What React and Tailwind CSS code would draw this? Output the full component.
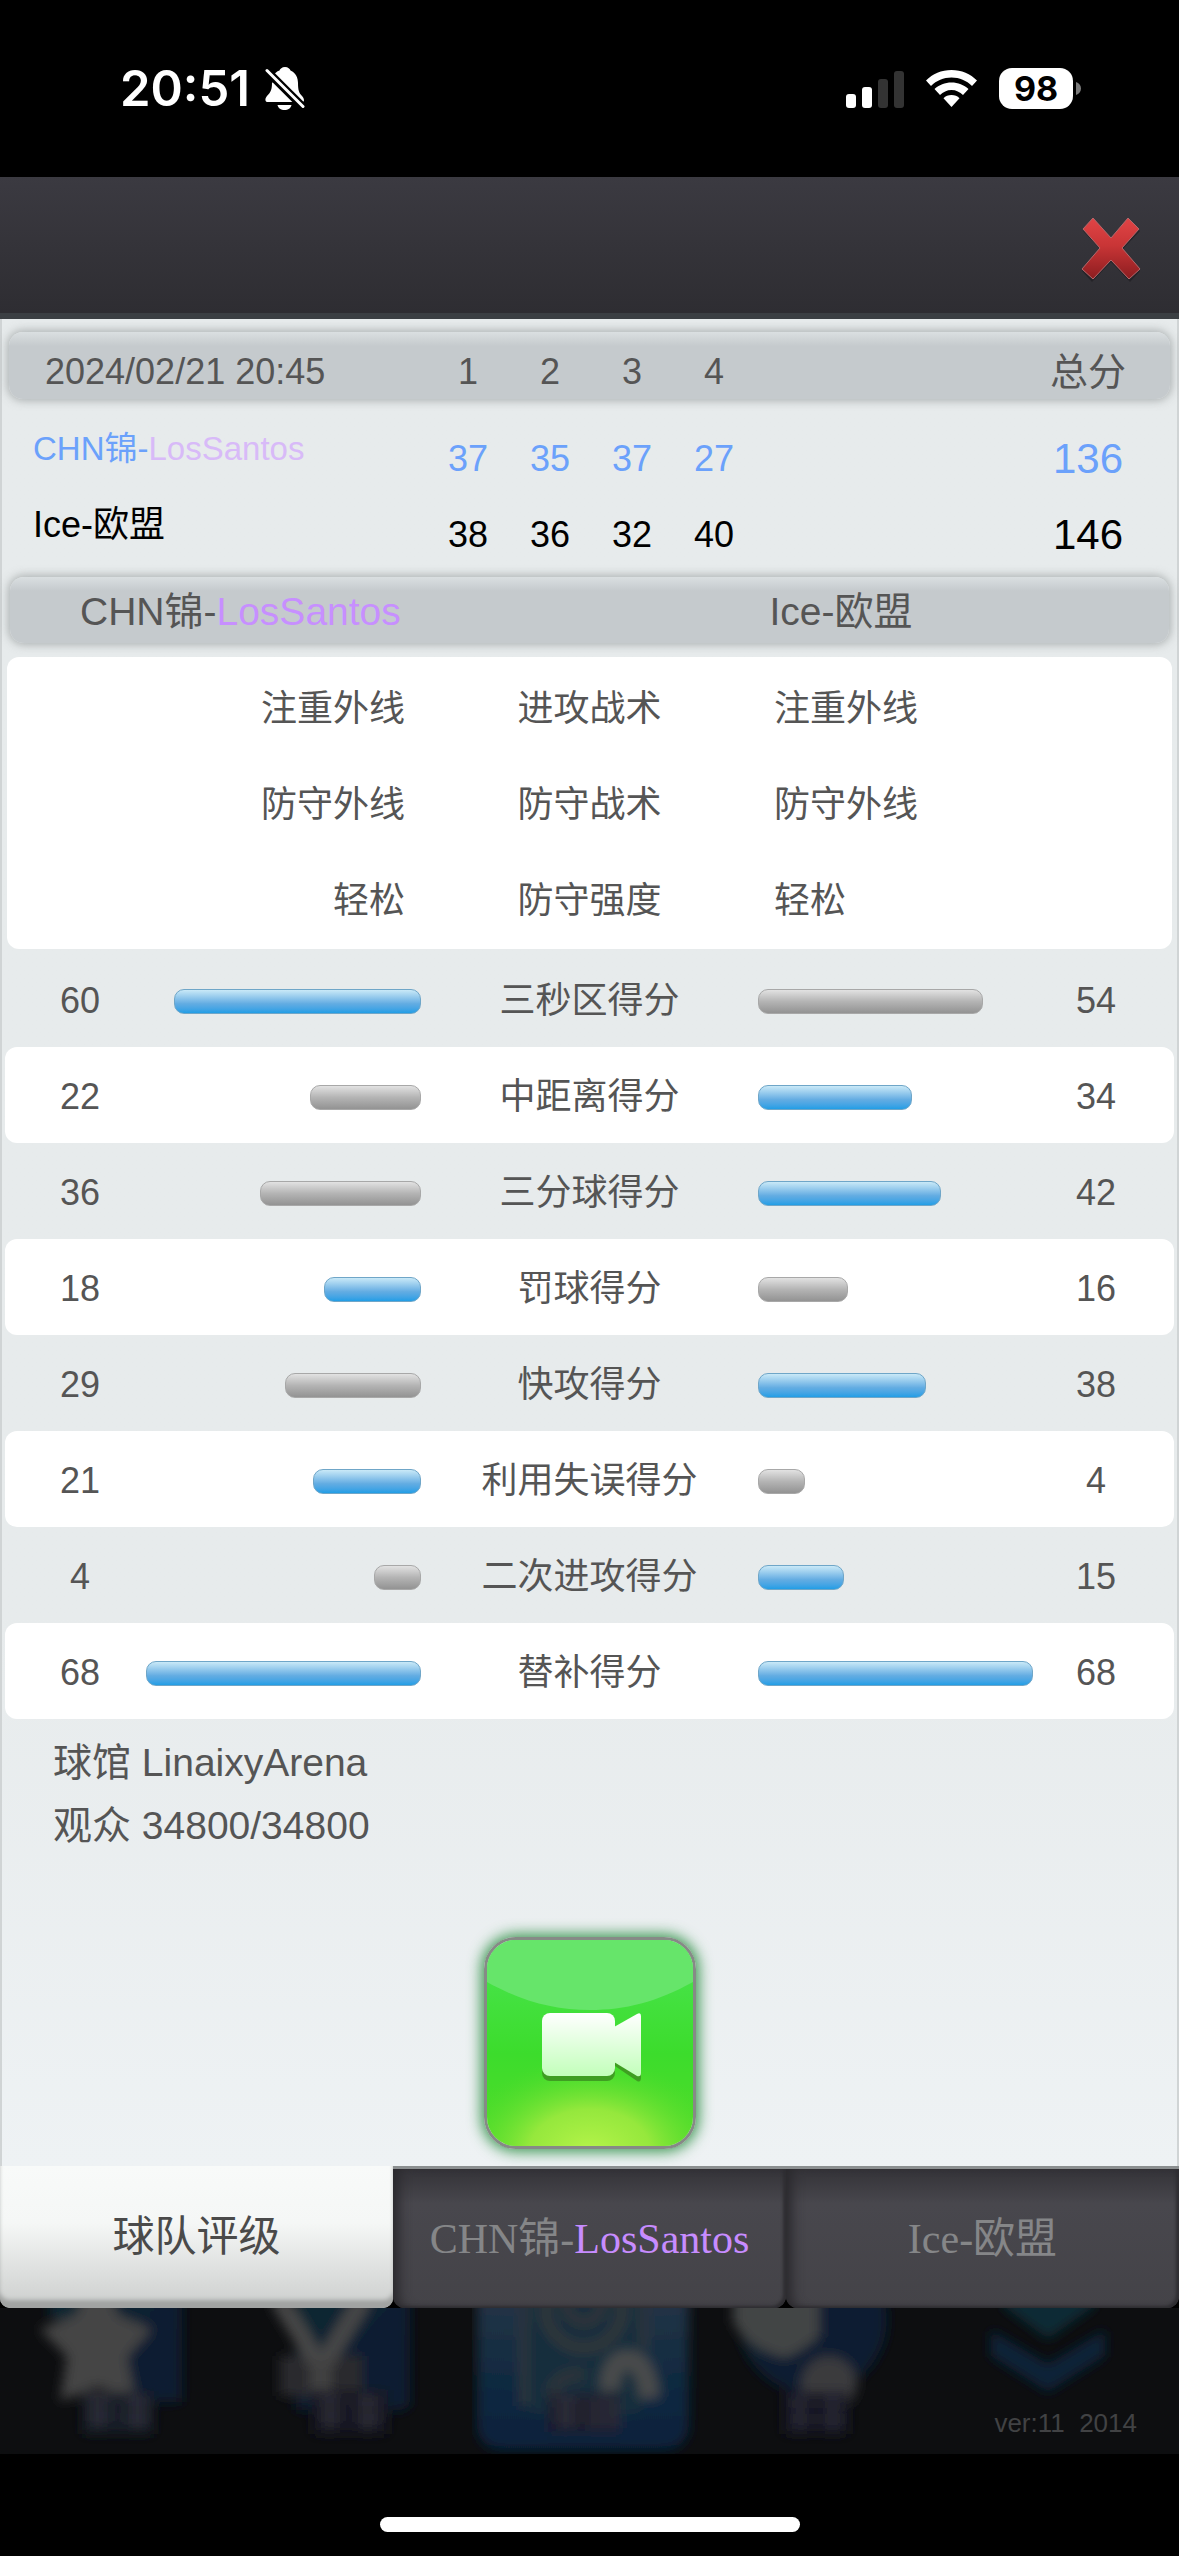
import { useState } from "react";
import clsx from "clsx";

const quarters = [
    { name: <><span className="text-[#6ba1fb]">CHN锦-</span><span className="text-[#d8baf8]">LosSantos</span></>, points: [37, 35, 37, 27], total: 136, color: "text-[#6ba1fb]", size: "text-[33px]" },
    { name: "Ice-欧盟", points: [38, 36, 32, 40], total: 146, color: "text-black", size: "text-[36px]" },
];

const tactics = [
    { home: "注重外线", label: "进攻战术", away: "注重外线" },
    { home: "防守外线", label: "防守战术", away: "防守外线" },
    { home: "轻松", label: "防守强度", away: "轻松" },
];

const stats = [
    { label: "三秒区得分", home: 60, away: 54 },
    { label: "中距离得分", home: 22, away: 34 },
    { label: "三分球得分", home: 36, away: 42 },
    { label: "罚球得分", home: 18, away: 16 },
    { label: "快攻得分", home: 29, away: 38 },
    { label: "利用失误得分", home: 21, away: 4 },
    { label: "二次进攻得分", home: 4, away: 15 },
    { label: "替补得分", home: 68, away: 68 },
];

const barStyle = "rounded-[14px] bg-gradient-to-b from-[#dadfe1] from-0% via-[#c5cacd] via-[14px] to-[#c5cacd] shadow-[0_0_8px_2px_rgba(120,125,125,0.5)]";

function StatusBar() {
    return (
        <div className="flex h-[177px] shrink-0 items-center justify-between bg-black pr-[98px] pl-[120px] font-['Inter',sans-serif] text-white">
            <div className="flex items-center gap-[15px]">
                <span className="text-[49px] leading-[60px] font-semibold">20:51</span>
                <svg className="h-[44px] w-[40px]" viewBox="0 0 40 44" aria-hidden="true">
                    <path d="M20 0c3 0 5 2 5.500 3.500C31 6 33 11 33 16c0 7 1 10 4 13 2 2 3 6 .5 6H3C0 35-.5 32 2 29c4-4 5-7 5-13 0-6 2-10.500 7.500-12.500C15 2 17 0 20 0z" fill="#fff" />
                    <path d="M12.500 38h14c-.5 3-3.500 5-7 5s-6.500-2-7-5z" fill="#fff" />
                    <path d="M0 0L12 0L40 32V44L36 44L0 8z" fill="none" />
                    <path d="M-2 0l42 42" stroke="#000" strokeWidth="8" />
                    <path d="M-2 6L8 16V2z" fill="#000" />
                    <path d="M2 3.500l36 36" stroke="#fff" strokeWidth="3" strokeLinecap="round" />
                </svg>
            </div>
            <div className="flex items-center">
                <svg className="h-[38px] w-[58px]" viewBox="0 0 58 38" aria-hidden="true">
                    <rect x="0" y="24" width="10" height="14" rx="3" fill="#fff" />
                    <rect x="16" y="17" width="10" height="21" rx="3" fill="#fff" />
                    <rect x="32" y="9" width="10" height="29" rx="3" fill="#333" />
                    <rect x="48" y="1" width="10" height="37" rx="3" fill="#333" />
                </svg>
                <svg className="ml-[22px] h-[37px] w-[51px]" viewBox="0 0 51 37" aria-hidden="true">
                    <path d="M25.500 0C35.500 0 44.500 4 51 10.500l-5 5.500C40.500 10.500 33.500 7.500 25.500 7.500S10.500 10.500 5 16L0 10.500C6.500 4 15.500 0 25.500 0z" fill="#fff" />
                    <path d="M25.500 12.500c6.500 0 12.500 2.500 17 6.500l-5.500 6c-3-3-7-5-11.500-5S17 22 14 25l-5.500-6c4.500-4 10.500-6.500 17-6.500z" fill="#fff" />
                    <path d="M25.500 25c3.200 0 6 1.200 8 3.200L25.500 37l-8-8.800c2-2 4.800-3.200 8-3.200z" fill="#fff" />
                </svg>
                <div className="ml-[22px] flex h-[41px] w-[74px] items-center justify-center rounded-[13px] bg-white text-[34px] leading-[40px] font-bold text-black">
                    98
                </div>
                <svg className="ml-[3px] h-[13px] w-[5px]" viewBox="0 0 5 13" aria-hidden="true">
                    <path d="M0 0c3 1 5 3.500 5 6.500S3 12 0 13z" fill="#7a7a7a" />
                </svg>
            </div>
        </div>
    );
}

function Bar({ value, win }) {
    return (
        <div
            className={clsx(
                "h-[25px] rounded-[10px] border",
                win
                    ? "border-[#6fa6c8] bg-gradient-to-b from-[#c9e9f7] via-[#62ace2] via-60% to-[#1f9ee6]"
                    : "border-[#a8a8a8] bg-gradient-to-b from-[#e2e2e2] via-[#b4b4b4] via-50% to-[#939393]"
            )}
            style={{ width: Math.round(33 + value * 3.56) }}
        />
    );
}

function ScoreTable() {
    const cols = "grid grid-cols-[418px_repeat(4,82px)_1fr_164px]";
    return (
        <table className="mx-[7px] block text-[36px] leading-[44px]">
            <thead className="block">
                <tr className={clsx(cols, barStyle, "h-[67px] items-center pt-[12px] text-[#555]")}>
                    <th className="pl-[36px] text-left font-normal">2024/02/21 20:45</th>
                    {[1, 2, 3, 4].map((q) => (
                        <th key={q} className="font-normal">{q}</th>
                    ))}
                    <th className="col-start-7 text-[38px] font-normal">总分</th>
                </tr>
            </thead>
            <tbody className="block pt-[22px] pb-[4px]">
                {quarters.map((team) => (
                    <tr key={team.total} className={clsx(cols, team.color, "h-[76px] items-center")}>
                        <th className={clsx("pb-[20px] pl-[24px] text-left font-normal", team.size)}>{team.name}</th>
                        {team.points.map((p, i) => (
                            <td key={i} className="text-center">{p}</td>
                        ))}
                        <td className="col-start-7 text-center text-[42px]">{team.total}</td>
                    </tr>
                ))}
            </tbody>
        </table>
    );
}

function VideoButton() {
    return (
        <button aria-label="录像" className="h-[212px] w-[212px] overflow-hidden rounded-[32px] border-[3px] border-[#868a86] shadow-[0_0_14px_3px_rgba(20,130,45,0.8)]">
            <svg className="h-full w-full" viewBox="0 0 206 206">
                <defs>
                    <linearGradient id="green" x1="0" y1="0" x2="0" y2="1">
                        <stop offset="0" stopColor="#4be653" />
                        <stop offset="0.55" stopColor="#3cdc2c" />
                        <stop offset="1" stopColor="#52dc28" />
                    </linearGradient>
                    <radialGradient id="glow" gradientUnits="userSpaceOnUse" cx="0" cy="0" r="100" gradientTransform="translate(103 212) scale(1.35 0.95)">
                        <stop offset="0" stopColor="#b6f44a" />
                        <stop offset="0.45" stopColor="#a2ea40" stopOpacity="0.85" />
                        <stop offset="1" stopColor="#4edc2c" stopOpacity="0" />
                    </radialGradient>
                    <linearGradient id="camera" x1="0" y1="0" x2="0" y2="1">
                        <stop offset="0" stopColor="#fff" />
                        <stop offset="1" stopColor="#c2ffba" />
                    </linearGradient>
                </defs>
                <rect width="206" height="206" fill="url(#green)" />
                <rect width="206" height="206" fill="url(#glow)" />
                <path d="M0 0h206v42C170 62 138 70 103 70S36 62 0 42z" fill="#66e56a" />
                <g fill="#3f9e22">
                    <rect x="55" y="79" width="73" height="62" rx="8" />
                    <path d="M128 92l22-13q4-2 4 2v56q0 6-4 4l-22-15z" />
                </g>
                <g fill="url(#camera)">
                    <rect x="55" y="73" width="73" height="63" rx="8" />
                    <path d="M127 87l23-13q4-2 4 2v57q0 4-4 3l-23-14z" />
                </g>
            </svg>
        </button>
    );
}

// Main menu behind the dialog, out of focus
function DimmedMenu() {
    const cell = "h-[146px] w-full overflow-hidden";
    return (
        <div className="relative grid h-[146px] shrink-0 grid-cols-5 overflow-hidden bg-[#0d0e10]">
            <svg className={cell} viewBox="0 0 236 146" preserveAspectRatio="none" aria-hidden="true">
                <defs>
                    <filter id="soft" x="-20%" y="-20%" width="140%" height="140%">
                        <feGaussianBlur stdDeviation="6" />
                    </filter>
                    <linearGradient id="navy" x1="0" y1="0" x2="1" y2="1">
                        <stop offset="0" stopColor="#0a2a33" />
                        <stop offset="0.6" stopColor="#091c30" />
                        <stop offset="1" stopColor="#081a30" />
                    </linearGradient>
                    <linearGradient id="tile" x1="0" y1="0" x2="0" y2="1">
                        <stop offset="0" stopColor="#293646" />
                        <stop offset="0.5" stopColor="#132c42" />
                        <stop offset="1" stopColor="#06203c" />
                    </linearGradient>
                </defs>
                <g filter="url(#soft)" colorInterpolationFilters="sRGB">
                    <path d="M50-10H182V94H125L110 20L50 10z" fill="url(#navy)" />
                    <path d="M98-45l20 52 34 14-25 28 9 44-38-14-38 14 7-44-27-28 36-14z" fill="#454545" />
                    <path d="M82 84h72v42H82z" fill="#191a25" />
                    <path d="M86 92h26M98 84v36M88 108h24M124 94h26M138 86v34M124 110h26" stroke="#32323d" strokeWidth="5" />
                </g>
            </svg>
            <svg className={cell} viewBox="0 0 236 146" preserveAspectRatio="none" aria-hidden="true">
                <g filter="url(#soft)">
                    <path d="M60-10h114V94q0 8-12 8H60z" fill="url(#navy)" />
                    <path d="M44 48h82v40H44z" fill="#2b2c2e" />
                    <path d="M42-10L85 60L128-10" fill="none" stroke="#464646" strokeWidth="18" />
                    <path d="M85 50v38" stroke="#434343" strokeWidth="20" />
                    <path d="M76 82h76v44H76z" fill="#181924" />
                    <path d="M82 92h24M94 86v36M84 108h22M118 94h28M132 86v36M120 110h26" stroke="#30303b" strokeWidth="5" />
                </g>
            </svg>
            <svg className={cell} viewBox="0 0 236 146" preserveAspectRatio="none" aria-hidden="true">
                <g filter="url(#soft)">
                    <rect x="5" y="-30" width="212" height="172" rx="24" fill="url(#tile)" />
                    <rect x="56" y="-20" width="116" height="126" rx="12" fill="#192d3c" />
                    <path d="M52-10v108M172-10v50" stroke="#2d353c" strokeWidth="9" />
                    <circle cx="112" cy="2" r="38" fill="none" stroke="#34383b" strokeWidth="10" />
                    <circle cx="112" cy="-4" r="18" fill="none" stroke="#303437" strokeWidth="10" />
                    <path d="M80 90q0-24 32-24" fill="none" stroke="#2e353a" strokeWidth="12" />
                    <path d="M138 82q0-30 18-30t22 38" fill="none" stroke="#4a4c4c" strokeWidth="20" />
                    <path d="M76 86h72v38H76z" fill="#1a1f2c" />
                    <path d="M82 94h26M94 88v32M84 110h24M122 90v30M134 86v34M144 92v28" stroke="#33333e" strokeWidth="5" />
                </g>
            </svg>
            <svg className={cell} viewBox="0 0 236 146" preserveAspectRatio="none" aria-hidden="true">
                <g filter="url(#soft)">
                    <circle cx="106" cy="12" r="74" fill="url(#navy)" />
                    <path d="M26-20h86v48q-14 14-34 22Q40 40 26 14z" fill="#434444" />
                    <circle cx="122" cy="76" r="28" fill="#3b3b3e" />
                    <path d="M76 84h66v42H76z" fill="#171824" />
                    <path d="M82 94h22M92 86v38M84 112h20M114 94h24M126 86v38M114 112h24" stroke="#2c2c38" strokeWidth="5" />
                </g>
            </svg>
            <svg className={cell} viewBox="0 0 236 146" preserveAspectRatio="none" aria-hidden="true">
                <g filter="url(#soft)">
                    <path d="M60-12h92v10L105 31L60-2z" fill="#0b2a36" />
                    <path d="M48 22L105 56L162 22V48L105 84L48 48z" fill="#0a2438" />
                </g>
            </svg>
            <span className="absolute right-[42px] bottom-[16px] text-[26px] leading-[30px] whitespace-pre text-[#414244]">ver:11  2014</span>
        </div>
    );
}

export default function App() {
    const [tab, setTab] = useState(0);
    const tabs = [
        "球队评级",
        <>CHN锦-<span className="text-[#c78cff]">LosSantos</span></>,
        "Ice-欧盟",
    ];

    return (
        <div className="flex min-h-screen flex-col bg-black font-['Liberation_Sans','Noto_Sans_CJK_SC',sans-serif]">
            <StatusBar />

            <header className="flex h-[142px] shrink-0 items-center justify-end border-b-[6px] border-[#3b3f43] bg-gradient-to-b from-[#3b3a41] to-[#2e2d32] pt-[8px] pr-[38px]">
                <button aria-label="关闭">
                    <svg className="h-[66px] w-[60px]" viewBox="0 0 60 66">
                        <defs>
                            <linearGradient id="red" x1="0" y1="0" x2="0" y2="1">
                                <stop offset="0" stopColor="#e04446" />
                                <stop offset="0.45" stopColor="#c93536" />
                                <stop offset="1" stopColor="#8c1d20" />
                            </linearGradient>
                        </defs>
                        <path d="M11 4L30 24L48 4L59 15L41 34L59 55L49 66L30 46L11 66L1 55L20 34L2 15z" fill="#1d1b1f" opacity="0.6" />
                        <path d="M12 2L30 22L47 2L58 13L41 32L59 53L48 63L30 44L12 63L1 53L19 32L2 13z" fill="url(#red)" stroke="#b5686b" strokeWidth="1" />
                    </svg>
                </button>
            </header>

            <main className="flex flex-1 flex-col border-x-2 border-[#d0d4d5] bg-gradient-to-b from-[#e7ebec] via-[#e7ebec] via-70% to-[#eef2f4] pt-[13px] text-[#555]">
                <ScoreTable />

                <div className={clsx(barStyle, "mx-[8px] grid h-[66px] grid-cols-2 items-center pt-[4px] text-[39px] leading-[44px]")}>
                    <h2 className="pl-[70px]">CHN锦-<span className="text-[#c78fff]">LosSantos</span></h2>
                    <h2 className="pl-[180px]">Ice-欧盟</h2>
                </div>

                <div className="mx-[5px] mt-[14px] rounded-[12px] bg-white pt-[4px] text-[36px] leading-[44px]">
                    {tactics.map((row) => (
                        <div key={row.label} className="grid h-[96px] grid-cols-[1fr_337px_1fr] items-center">
                            <span className="pr-[16px] text-right">{row.home}</span>
                            <span className="text-center">{row.label}</span>
                            <span className="pl-[16px]">{row.away}</span>
                        </div>
                    ))}
                </div>

                <div className="mx-[3px] mt-[2px] text-[36px] leading-[44px]">
                    {stats.map((row) => (
                        <div key={row.label} className="grid h-[96px] grid-cols-[1fr_337px_1fr] items-center rounded-[12px] pt-[4px] even:bg-white">
                            <div className="flex items-center justify-between pl-[45px]">
                                <span className="w-[60px] text-center">{row.home}</span>
                                <Bar value={row.home} win={row.home >= row.away} />
                            </div>
                            <span className="text-center">{row.label}</span>
                            <div className="flex items-center justify-between pr-[48px]">
                                <Bar value={row.away} win={row.away >= row.home} />
                                <span className="w-[60px] text-center">{row.away}</span>
                            </div>
                        </div>
                    ))}
                </div>

                <div className="mt-[12px] pl-[51px] text-[39px] leading-[63px]">
                    <p>球馆 LinaixyArena</p>
                    <p>观众 34800/34800</p>
                </div>

                <div className="mt-auto flex justify-center pb-[17px]">
                    <VideoButton />
                </div>
            </main>

            <nav className="grid h-[142px] shrink-0 grid-cols-3">
                {tabs.map((label, i) => (
                    <button
                        key={i}
                        onClick={() => setTab(i)}
                        className={clsx(
                            "text-[42px] leading-[50px]",
                            tab === i
                                ? "rounded-b-[10px] bg-gradient-to-b from-[#f8faf9] via-[#f5f7f6] via-40% to-[#cccecd] text-[#4a4a4a] shadow-[inset_0_-9px_4px_-1px_#a1a3a2]"
                                : "rounded-b-[12px] border-t-[3px] border-[#8b8f90] bg-gradient-to-b from-[#343338] via-[#48474d] via-25% to-[#444348] font-['Liberation_Serif','Noto_Sans_CJK_SC',serif] text-[#858688] shadow-[inset_12px_0_12px_-6px_#2a292d,inset_-3px_-2px_3px_#2f2e32]"
                        )}
                    >
                        {label}
                    </button>
                ))}
            </nav>

            <DimmedMenu />

            <footer className="flex h-[102px] shrink-0 items-end justify-center bg-black pb-[24px]">
                <div className="h-[15px] w-[420px] rounded-full bg-white" />
            </footer>
        </div>
    );
}
